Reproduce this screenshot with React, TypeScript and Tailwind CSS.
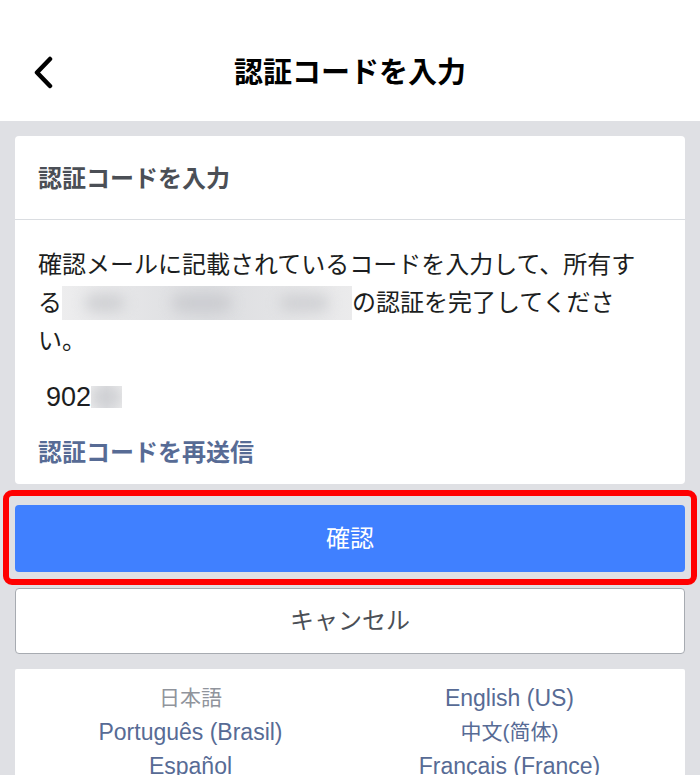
import React from "react";

const font = { fontFamily: '"Liberation Sans", "Noto Sans CJK JP", sans-serif' };

function Redacted({ className }: { className: string }) {
  return (
    <span className={`relative inline-block align-middle overflow-hidden ${className}`}>
      <span className="absolute inset-0 bg-gradient-to-r from-[#ededee] via-[#dcdde0] to-[#ebebec]" />
      <span className="absolute inset-0 blur-[7px] flex items-center justify-around">
        <span className="w-[40px] h-[18px] rounded-full bg-[#cfd0d3]" />
        <span className="w-[60px] h-[18px] rounded-full bg-[#cbccd0]" />
        <span className="w-[50px] h-[18px] rounded-full bg-[#d0d1d4]" />
      </span>
    </span>
  );
}

export default function App() {
  return (
    <div className="w-[700px] h-[775px] overflow-hidden bg-[#dfe0e4]" style={font}>
      {/* top bar */}
      <div className="relative h-[121px] bg-white flex items-center justify-center pt-[27px]">
        <svg className="absolute left-[30px] top-[56px]" width="28" height="33" viewBox="0 0 28 33">
          <polyline points="20,3 7,16.5 20,30" fill="none" stroke="#000" strokeWidth="4.5" strokeLinecap="round" strokeLinejoin="round" />
        </svg>
        <h1 className="text-[29px] font-bold text-black">認証コードを入力</h1>
      </div>

      <div className="px-[15px] pt-[15px]">
        {/* main card */}
        <div className="bg-white rounded-[4px]">
          <div className="h-[84px] flex items-center px-[23px] pt-[3px] border-b border-[#dadde1]">
            <h2 className="text-[24px] font-bold text-[#4b4f56]">認証コードを入力</h2>
          </div>
          <div className="px-[23px] pt-[26px] pb-[12px]">
            <p className="text-[24px] leading-[38px] text-[#1c1e21]">
              確認メールに記載されているコードを入力して、所有す
              <br />
              る<Redacted className="w-[290px] h-[34px] -mt-[4px]" />の認証を完了してくださ
              <br />
              い。
            </p>
            <div className="mt-[18px] pl-[8px] text-[27px] leading-[38px] text-[#1c1e21] flex items-center">
              902
              <Redacted className="w-[31px] h-[22px]" />
            </div>
            <div className="mt-[18px] text-[24px] leading-[38px] font-bold text-[#576b95]">
              認証コードを再送信
            </div>
          </div>
        </div>

        {/* highlighted confirm button */}
        <div className="-mx-[12px] mt-[6px] border-[6px] border-[#ff0000] rounded-[9px] px-[6px] pt-[9px] pb-[7px]">
          <button className="w-full h-[67px] rounded-[4px] bg-[#4080ff] text-white text-[24px]">
            確認
          </button>
        </div>

        <button className="mt-[3px] w-full h-[66px] rounded-[4px] bg-white border-[1.5px] border-[#a7abb1] text-[24px] text-[#4b4f56]">
          キャンセル
        </button>

        {/* languages */}
        <div className="mt-[15px] bg-white rounded-t-[2px] px-[16px] pt-[12px] pb-[16px] grid grid-cols-2 text-[23px] leading-[34px] text-center text-[#576b95]">
          <div className="text-[#90949c] text-[21px]">日本語</div>
          <div>English (US)</div>
          <div>Português (Brasil)</div>
          <div className="text-[21px]">中文(简体)</div>
          <div>Español</div>
          <div>Français (France)</div>
        </div>
      </div>
    </div>
  );
}
